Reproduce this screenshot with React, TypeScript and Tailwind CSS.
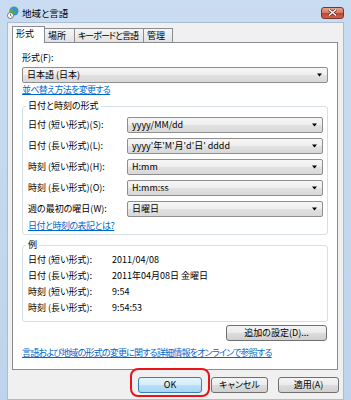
import React from "react";

function Combo({ value, className = "" }: { value: string; className?: string }) {
  return (
    <div
      className={`flex h-[16px] items-center justify-between rounded-[2px] border border-[#8f8f8f] bg-[linear-gradient(#f6f6f6_0%,#eeeeee_50%,#e2e2e2_50%,#d8d8d8_100%)] pl-[4px] pr-[5px] ${className}`}
    >
      <span className="leading-[14px]">{value}</span>
      <svg width="5" height="4" viewBox="0 0 5 4">
        <path d="M0 0.5h5L2.5 3.5z" fill="#000" />
      </svg>
    </div>
  );
}

function Button({ label, className = "", primary = false }: { label: string; className?: string; primary?: boolean }) {
  return (
    <div
      className={`flex h-[16px] items-center justify-center rounded-[3px] border leading-[14px] ${
        primary
          ? "border-[#3c7fb1] bg-[linear-gradient(#e5f4fc_0%,#d4ecfa_50%,#b8e0f6_50%,#a6d6f2_100%)]"
          : "border-[#707070] bg-[linear-gradient(#f4f4f4_0%,#ebebeb_50%,#dddddd_50%,#d0d0d0_100%)]"
      } ${className}`}
    >
      {label}
    </div>
  );
}

function Link({ children, className = "" }: { children: React.ReactNode; className?: string }) {
  return <div className={`w-fit whitespace-nowrap leading-[12px] text-[#0066cc] underline underline-offset-[1px] ${className}`}>{children}</div>;
}

function GlobeIcon() {
  return (
    <svg width="12" height="13" viewBox="0 0 12 13">
      <circle cx="7" cy="5" r="4.6" fill="#3a8fd8" />
      <path d="M4.5 2.2c1 .3 1.6 1.2 1.2 2.2-.4.8 .6 1.3 1.3 1 .9-.4 1.6.5 1.2 1.4-.3.6-.9 1.2-1.6 1.5C5 8.6 3.4 7.6 2.8 6 2.3 4.6 3 3 4.5 2.2z" fill="#4fb33c" />
      <path d="M8.5 1.2c.8.4 1.6 1.3 1.9 2.3-.7.2-1.4-.3-1.9-1z" fill="#4fb33c" />
      <circle cx="3.5" cy="9.5" r="3" fill="#fff" stroke="#555" strokeWidth="0.8" />
      <path d="M3.5 7.8v1.8l1.2.7" stroke="#333" strokeWidth="0.7" fill="none" />
    </svg>
  );
}

const dateRows = [
  { label: "日付 (短い形式)(S):", value: "yyyy/MM/dd" },
  { label: "日付 (長い形式)(L):", value: "yyyy'年'M'月'd'日' dddd" },
  { label: "時刻 (短い形式)(H):", value: "H:mm" },
  { label: "時刻 (長い形式)(O):", value: "H:mm:ss" },
  { label: "週の最初の曜日(W):", value: "日曜日" },
];

const sampleRows = [
  { label: "日付 (短い形式):", value: "2011/04/08" },
  { label: "日付 (長い形式):", value: "2011年04月08日 金曜日" },
  { label: "時刻 (短い形式):", value: "9:54" },
  { label: "時刻 (長い形式):", value: "9:54:53" },
];

const tabClass =
  "ml-[-1px] flex h-[14px] items-center overflow-hidden whitespace-nowrap border border-b-0 border-[#898c95] bg-[linear-gradient(#f6f6f6,#e2e2e2)] pl-[3px]";

export default function App() {
  return (
    <div className="relative h-[400px] w-[351px] overflow-hidden bg-[linear-gradient(#cadcf1,#bfd3ea)] font-['Noto_Sans_CJK_JP',sans-serif] text-[9px] text-black [font-feature-settings:'palt']">
      {/* title bar */}
      <div className="flex h-[22px] items-center pl-[7px] pr-[7px] pt-[3px]">
        <GlobeIcon />
        <span className="ml-[3px] text-[9.5px] leading-[12px]">地域と言語</span>
        <div className="ml-auto flex h-[12px] w-[23px] items-center justify-center rounded-[3px] border border-[#6e3a30] bg-[linear-gradient(#e8a190_0%,#d67a66_45%,#c4432f_55%,#d0604b_100%)]">
          <svg width="9" height="7" viewBox="0 0 9 7">
            <path d="M1 0.5l7 6M8 0.5l-7 6" stroke="#4a1a14" strokeWidth="2.6" />
            <path d="M1 0.5l7 6M8 0.5l-7 6" stroke="#fff" strokeWidth="1.5" />
          </svg>
        </div>
      </div>

      {/* client area */}
      <div className="mx-[7px] h-[378px] border border-[#a9bdd6] bg-[#f0f0f0]">
        <div className="ml-[4px] mt-[2px] flex h-[17px] items-end">
          <div className="relative z-10 mb-[-1px] flex h-[17px] w-[33px] items-start border border-b-0 border-[#898c95] bg-white pl-[3px] pt-[1px] leading-[12px]">
            形式
          </div>
          <div className={`${tabClass} w-[31px]`}>場所</div>
          <div className={`${tabClass} w-[70px] tracking-[-1px]`}>キーボードと言語</div>
          <div className={`${tabClass} w-[30px]`}>管理</div>
        </div>

        {/* tab panel */}
        <div className="ml-[4px] h-[328px] w-[326px] border border-[#898c95] bg-white px-[9px] pt-[9px]">
          <div className="leading-[12px]">形式(F):</div>
          <Combo className="mt-[3px]" value="日本語 (日本)" />
          <Link className="mt-[1px] tracking-[-0.7px]">並べ替え方法を変更する</Link>

          <fieldset className="mt-[4px] rounded-[3px] border border-[#d5dfe5] pb-[2px] pl-[5px] pr-[4px]">
            <legend className="ml-[-2px] px-[2px] leading-[12px]">日付と時刻の形式</legend>
            <div className="flex flex-col gap-[5px] pt-[5px]">
              {dateRows.map((r) => (
                <div key={r.label} className="flex items-center">
                  <span className="w-[99px] leading-[12px]">{r.label}</span>
                  <Combo className="flex-1" value={r.value} />
                </div>
              ))}
            </div>
            <Link className="mt-[3px] tracking-[-0.5px]">日付と時刻の表記とは?</Link>
          </fieldset>

          <fieldset className="mt-[4px] rounded-[3px] border border-[#d5dfe5] pb-[5px] pl-[5px] pr-[4px]">
            <legend className="ml-[-2px] px-[2px] leading-[12px]">例</legend>
            <div className="pt-[1px]">
              {sampleRows.map((r) => (
                <div key={r.label} className="flex h-[16px] items-center leading-[16px]">
                  <span className="w-[84px]">{r.label}</span>
                  <span>{r.value}</span>
                </div>
              ))}
            </div>
          </fieldset>

          <div className="mt-[3px] flex justify-end pr-[1px]">
            <Button className="w-[101px]" label="追加の設定(D)..." />
          </div>
          <Link className="mt-[6px] tracking-[-0.8px]">言語および地域の形式の変更に関する詳細情報をオンラインで参照する</Link>
        </div>

        {/* dialog buttons */}
        <div className="mt-[7px] flex justify-end pr-[4px]">
          <Button primary className="w-[64px]" label="OK" />
          <Button className="ml-[9px] w-[57px]" label="キャンセル" />
          <Button className="ml-[10px] w-[61px]" label="適用(A)" />
        </div>
      </div>

      {/* red annotation around OK */}
      <div className="absolute left-[130px] top-[368px] h-[29px] w-[80px] rounded-[8px] border-2 border-[#e8141a]" />
    </div>
  );
}
